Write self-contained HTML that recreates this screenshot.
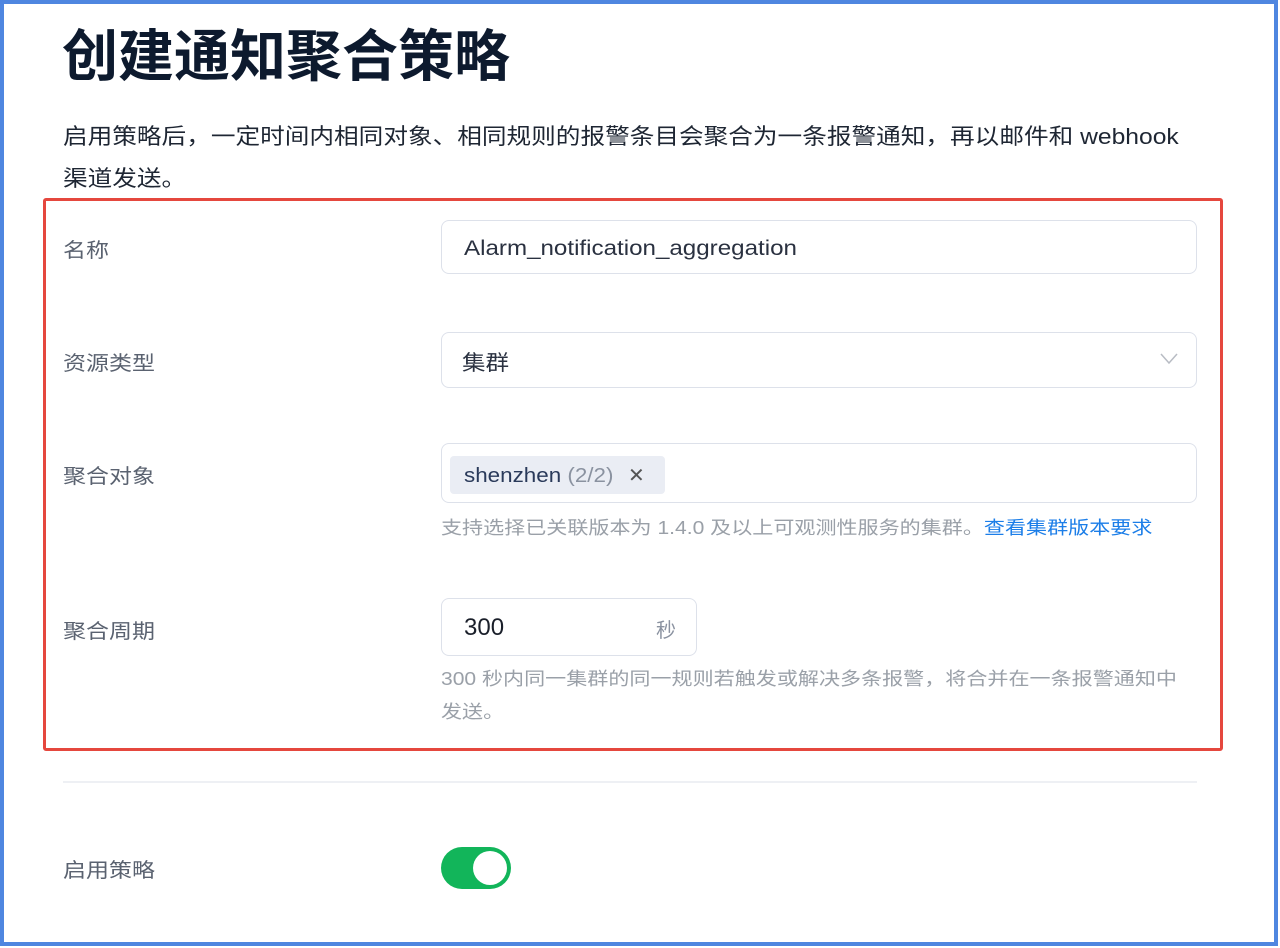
<!DOCTYPE html>
<html><head><meta charset="utf-8"><style>
*{margin:0;padding:0;box-sizing:border-box}
body{width:1280px;height:948px;background:#fff;font-family:"Liberation Sans","Noto Sans CJK SC",sans-serif;position:relative;overflow:hidden}
.frame{position:absolute;left:0;top:0;width:1278px;height:946px;border:4px solid #4f86e0}
.a{position:absolute;white-space:nowrap}
.sx{display:inline-block;transform-origin:0 50%;white-space:nowrap}
h1{position:absolute;left:62px;top:12px;font-size:56px;font-weight:bold;color:#0d1a2e}
.desc{position:absolute;left:63px;top:116px;font-size:22px;line-height:42px;color:#1e2633}
.red{position:absolute;left:43px;top:198px;width:1180px;height:553px;border:3px solid #e5473e;border-radius:3px}
.lab{position:absolute;left:63px;font-size:20px;color:#5a6270;transform:scaleX(1.15);transform-origin:0 50%}
.inp{position:absolute;left:441px;width:756px;border:1.5px solid #dde1ea;border-radius:8px;font-size:21px;color:#2a3140}
.hint{position:absolute;left:441px;font-size:18px;color:#9aa0a8;line-height:33px;transform:scaleX(1.17);transform-origin:0 0;white-space:nowrap}
</style></head><body>
<div class="frame"></div>
<h1>创建通知聚合策略</h1>
<div class="desc"><span class="sx" style="transform:scaleX(1.12)">启用策略后，一定时间内相同对象、相同规则的报警条目会聚合为一条报警通知，再以邮件和 webhook</span><br><span class="sx" style="transform:scaleX(1.12)">渠道发送。</span></div>
<div class="red"></div>
<div class="lab" style="top:234px">名称</div>
<div class="inp" style="top:220px;height:54px;padding:16px 0 0 22px"><span class="sx" style="transform:scaleX(1.15)">Alarm_notification_aggregation</span></div>
<div class="lab" style="top:347px">资源类型</div>
<div class="inp" style="top:332px;height:56px;padding:14px 0 0 20px"><span class="sx" style="transform:scaleX(1.12)">集群</span>
<svg style="position:absolute;right:18px;top:20px" width="18" height="12" viewBox="0 0 18 12"><path d="M1 1 L9 10 L17 1" fill="none" stroke="#b8bcc4" stroke-width="1.5"/></svg></div>
<div class="lab" style="top:460px">聚合对象</div>
<div class="inp" style="top:443px;height:60px"></div>
<div class="a" style="left:450px;top:456px;width:215px;height:38px;background:#eaedf4;border-radius:4px;font-size:20px;color:#2a3a5a;padding:9px 0 0 14px"><span class="sx" style="transform:scaleX(1.12)">shenzhen <span style="color:#8a92a0">(2/2)</span></span><span style="position:absolute;left:178px;top:7px;color:#555">✕</span></div>
<div class="hint" style="top:512px">支持选择已关联版本为 1.4.0 及以上可观测性服务的集群。<span style="color:#1c7ee8">查看集群版本要求</span></div>
<div class="lab" style="top:615px">聚合周期</div>
<div class="inp" style="top:598px;width:256px;height:58px;padding:15px 0 0 22px;font-size:24px;color:#1a1f2a">300<span style="position:absolute;right:20px;top:15px;font-size:20px;color:#8a92a0">秒</span></div>
<div class="hint" style="top:663px">300 秒内同一集群的同一规则若触发或解决多条报警，将合并在一条报警通知中<br>发送。</div>
<div class="a" style="left:63px;top:781px;width:1134px;height:2px;background:#eef0f4"></div>
<div class="lab" style="top:854px">启用策略</div>
<div class="a" style="left:441px;top:847px;width:70px;height:42px;background:#12b55a;border-radius:21px"><div style="position:absolute;right:4px;top:4px;width:34px;height:34px;background:#fff;border-radius:50%"></div></div>
</body></html>
